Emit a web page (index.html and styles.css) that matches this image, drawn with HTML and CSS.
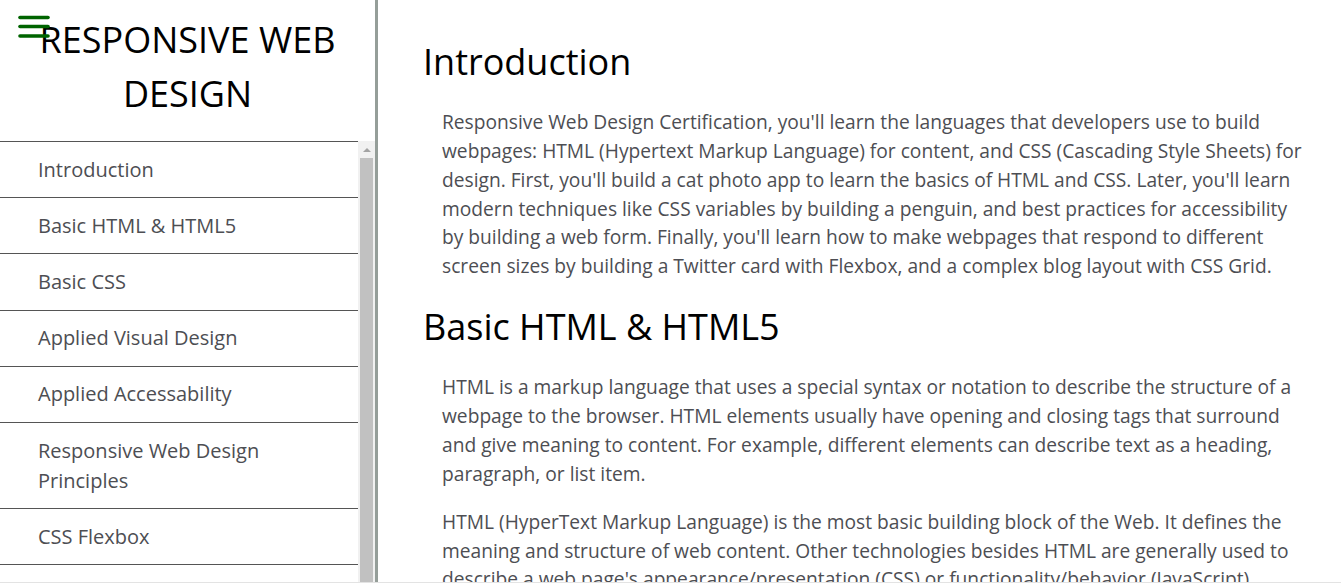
FILE: index.html
```html
<!DOCTYPE html>
<html lang="en">
<head>
<meta charset="utf-8">
<title>Responsive Web Design</title>
<link rel="stylesheet" href="styles.css">
</head>
<body>
<div class="page">
  <nav class="sidebar" id="navbar">
    <header class="side-head">
      <button class="burger" aria-label="menu">
        <svg width="34" height="26" viewBox="0 0 34 26">
          <g stroke="#006400" stroke-width="3.6" stroke-linecap="round">
            <line x1="3" y1="3.5" x2="31" y2="3.5"/>
            <line x1="3" y1="12.5" x2="31" y2="12.5"/>
            <line x1="3" y1="22" x2="31" y2="22"/>
          </g>
        </svg>
      </button>
      <h1 class="side-title">RESPONSIVE WEB DESIGN</h1>
    </header>
    <div class="nav-area">
      <ul class="nav-list">
        <li><a class="nav-link" href="#Introduction">Introduction</a></li>
        <li><a class="nav-link" href="#Basic_HTML">Basic HTML &amp; HTML5</a></li>
        <li><a class="nav-link" href="#Basic_CSS">Basic CSS</a></li>
        <li><a class="nav-link" href="#Applied_Visual_Design">Applied Visual Design</a></li>
        <li><a class="nav-link" href="#Applied_Accessability">Applied Accessability</a></li>
        <li><a class="nav-link" href="#Principles">Responsive Web Design Principles</a></li>
        <li><a class="nav-link" href="#CSS_Flexbox">CSS Flexbox</a></li>
        <li><a class="nav-link" href="#CSS_Grid">CSS Grid</a></li>
        <li><a class="nav-link" href="#Projects">Responsive Web Design Projects</a></li>
      </ul>
      <div class="scrollbar" aria-hidden="true">
        <div class="scroll-btn"><span class="scroll-arrow"></span></div>
        <div class="scroll-thumb"></div>
      </div>
    </div>
  </nav>
  <main class="main" id="main-doc">
    <section class="main-section" id="Introduction">
      <header class="sec-title">Introduction</header>
      <p>Responsive Web Design Certification, you'll learn the languages that developers use to build webpages: HTML (Hypertext Markup Language) for content, and CSS (Cascading Style Sheets) for design. First, you'll build a cat photo app to learn the basics of HTML and CSS. Later, you'll learn modern techniques like CSS variables by building a penguin, and best practices for accessibility by building a web form. Finally, you'll learn how to make webpages that respond to different screen sizes by building a Twitter card with Flexbox, and a complex blog layout with CSS Grid.</p>
    </section>
    <section class="main-section" id="Basic_HTML">
      <header class="sec-title">Basic HTML &amp; HTML5</header>
      <p>HTML is a markup language that uses a special syntax or notation to describe the structure of a webpage to the browser. HTML elements usually have opening and closing tags that surround and give meaning to content. For example, different elements can describe text as a heading, paragraph, or list item.</p>
      <p>HTML (HyperText Markup Language) is the most basic building block of the Web. It defines the meaning and structure of web content. Other technologies besides HTML are generally used to describe a web page's appearance/presentation (CSS) or functionality/behavior (JavaScript).</p>
    </section>
  </main>
</div>
<div class="bottom-edge"></div>
</body>
</html>
```
FILE: styles.css
```css
html, body {
  margin: 0;
  padding: 0;
  height: 100%;
  overflow: hidden;
  background: #ffffff;
}

body {
  display: flex;
  flex-direction: column;
  font-family: "Open Sans", "Noto Sans", sans-serif;
}

.page {
  flex: 1;
  min-height: 0;
  display: flex;
}

.bottom-edge {
  height: 1px;
  background: #e3e3e3;
}

.sidebar {
  width: 375px;
  flex: none;
  border-right: 3px solid #959e99;
  display: flex;
  flex-direction: column;
  min-height: 0;
  overflow: hidden;
}

.side-head {
  position: relative;
  height: 141px;
  box-sizing: border-box;
  padding-top: 13px;
  flex: none;
}

.burger {
  position: absolute;
  left: 17px;
  top: 14px;
  padding: 0;
  border: 0;
  background: transparent;
  line-height: 0;
}

.side-title {
  margin: 0;
  font-weight: 400;
  font-size: 36px;
  line-height: 54px;
  text-align: center;
  color: #000;
}

.nav-area {
  flex: 1;
  min-height: 0;
  display: flex;
}

.nav-list {
  list-style: none;
  margin: 0;
  padding: 0;
  width: 358px;
  flex: none;
  border-top: 1px solid #555;
  overflow: hidden;
}

.nav-list li {
  border-bottom: 1px solid #555;
}

.nav-link {
  display: block;
  padding: 12.6px 40px 12.6px 38px;
  font-size: 20px;
  line-height: 30px;
  color: #4d4e53;
  text-decoration: none;
}

.scrollbar {
  width: 17px;
  flex: none;
  background: #f1f1f1;
  display: flex;
  flex-direction: column;
}

.scroll-btn {
  height: 17px;
  flex: none;
  display: flex;
  align-items: center;
  justify-content: center;
}

.scroll-arrow {
  width: 0;
  height: 0;
  border-left: 4px solid transparent;
  border-right: 4px solid transparent;
  border-bottom: 4px solid #a3a3a3;
}

.scroll-thumb {
  flex: 1;
  margin: 0 2px 0 2px;
  background: #c1c1c1;
}

.main {
  flex: 1;
  min-width: 0;
  overflow: hidden;
  padding: 35px 33px 0 45px;
}

.sec-title {
  font-size: 36px;
  line-height: 54px;
  color: #000;
  margin: 0;
}

.main-section p {
  margin: 19.2px 0 19.2px 19px;
  font-size: 19.2px;
  line-height: 28.8px;
  color: #4d4e53;
}
```
